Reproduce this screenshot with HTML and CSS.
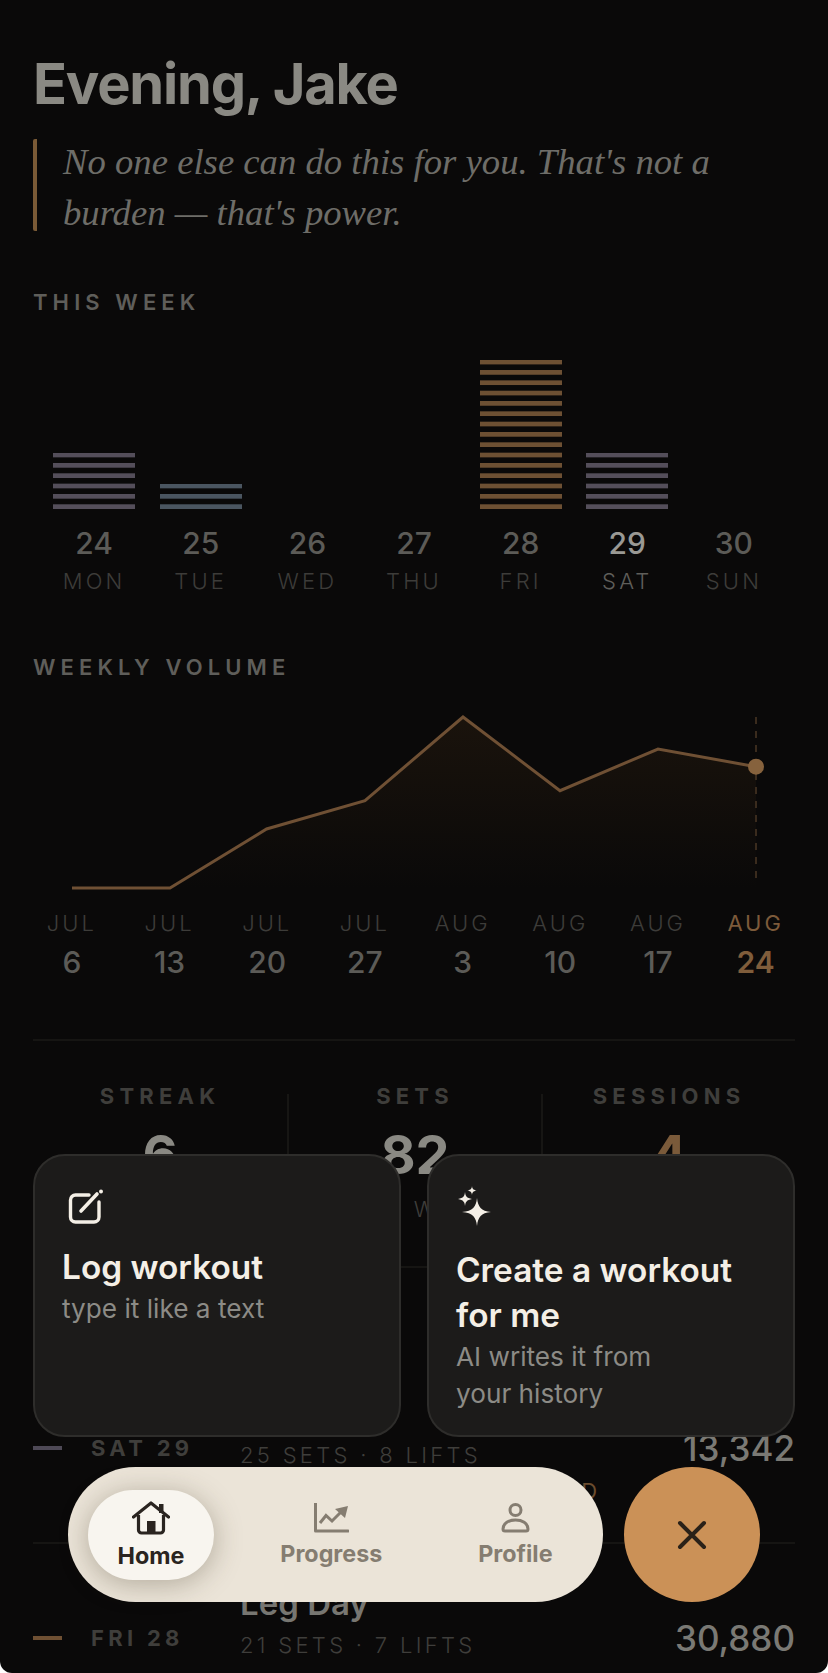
FILE: index.html
```html
<!DOCTYPE html>
<html lang="en">
<head>
<meta charset="utf-8">
<title>Home</title>
<link rel="stylesheet" href="styles.css">
</head>
<body>
<div class="screen">
  <main class="content">
    <h1 class="greeting">Evening, Jake</h1>
    <blockquote class="quote"><p class="quote-text">No one else can do this for you. That's not a burden — that's power.</p></blockquote>

    <h2 class="section-label week-label">THIS WEEK</h2>
    <div class="week-bars">
      <div class="bar bar-plum s6"></div>
      <div class="bar bar-slate s3"></div>
      <div class="bar"></div>
      <div class="bar"></div>
      <div class="bar bar-amber s15"></div>
      <div class="bar bar-plum s6"></div>
      <div class="bar"></div>
    </div>
    <div class="week-days">
      <div class="day"><b>24</b><span>MON</span></div>
      <div class="day"><b>25</b><span>TUE</span></div>
      <div class="day"><b>26</b><span>WED</span></div>
      <div class="day"><b>27</b><span>THU</span></div>
      <div class="day"><b>28</b><span>FRI</span></div>
      <div class="day today"><b>29</b><span>SAT</span></div>
      <div class="day"><b>30</b><span>SUN</span></div>
    </div>

    <h2 class="section-label volume-label">WEEKLY VOLUME</h2>
    <svg class="chart" viewBox="0 12 762 228" aria-hidden="true">
      <defs>
        <linearGradient id="area" x1="0" y1="0" x2="0" y2="1">
          <stop offset="0" stop-color="#1a130c"/>
          <stop offset="1" stop-color="#0a0909"/>
        </linearGradient>
      </defs>
      <path d="M39 219 L137 219 L233.600 160 L332 131.700 L430 48 L527 121.700 L625 80 L723 97.700 V219 Z" fill="url(#area)"/>
      <line x1="723" y1="48" x2="723" y2="216" stroke="#3a2b1d" stroke-width="2" stroke-dasharray="7 7"/>
      <path d="M39 219 L137 219 L233.600 160 L332 131.700 L430 48 L527 121.700 L625 80 L723 97.700" fill="none" stroke="#6f5034" stroke-width="3"/>
      <circle cx="723" cy="97.700" r="8" fill="#86623d"/>
    </svg>
    <div class="weeks">
      <div class="wk"><span>JUL</span><b>6</b></div>
      <div class="wk"><span>JUL</span><b>13</b></div>
      <div class="wk"><span>JUL</span><b>20</b></div>
      <div class="wk"><span>JUL</span><b>27</b></div>
      <div class="wk"><span>AUG</span><b>3</b></div>
      <div class="wk"><span>AUG</span><b>10</b></div>
      <div class="wk"><span>AUG</span><b>17</b></div>
      <div class="wk current"><span>AUG</span><b>24</b></div>
    </div>

    <section class="stats">
      <div class="stat"><h3>STREAK</h3><strong>6</strong><small>WEEKS</small></div>
      <div class="stat"><h3>SETS</h3><strong>82</strong><small>THIS WEEK</small></div>
      <div class="stat stat-accent"><h3>SESSIONS</h3><strong>4</strong><small>THIS WEEK</small></div>
    </section>

    <article class="row row-first">
      <div class="row-day"><i class="dash dash-plum"></i><span>SAT 29</span></div>
      <div class="row-main">
        <h4>Push Day</h4>
        <p class="row-meta">25 SETS · 8 LIFTS</p>
        <p class="row-note">BEST SET · 225 LB ADDED</p>
      </div>
      <div class="row-volume">13,342</div>
    </article>
    <article class="row">
      <div class="row-day"><i class="dash dash-amber"></i><span>FRI 28</span></div>
      <div class="row-main">
        <h4>Leg Day</h4>
        <p class="row-meta">21 SETS · 7 LIFTS</p>
        <p class="row-note">BEST SET · 315 LB ADDED</p>
      </div>
      <div class="row-volume">30,880</div>
    </article>
  </main>

  <div class="overlay">
    <div class="cards">
      <button class="card">
        <svg class="card-icon" width="36" height="36" viewBox="0 0 36 36" aria-hidden="true">
          <path d="M21 6 H7.500 A5 5 0 0 0 2.500 11 V28 A5 5 0 0 0 7.500 33 H26 A5 5 0 0 0 31 28 V13" fill="none" stroke="#f4efe6" stroke-width="3.400" stroke-linecap="round"/>
          <path d="M13 22 L29 5" fill="none" stroke="#f4efe6" stroke-width="3.600" stroke-linecap="round"/>
          <circle cx="33" cy="2.500" r="2" fill="#f4efe6"/>
        </svg>
        <span class="card-title">Log workout</span>
        <span class="card-sub">type it like a text</span>
      </button>
      <button class="card">
        <svg class="card-icon sparkle" width="36" height="40" viewBox="0 0 36 40" aria-hidden="true">
          <path d="M20 12 C21 21 24 25 34 26 C24 27 21 31 20 40 C19 31 16 27 5 26 C16 25 19 21 20 12 Z" fill="#f4efe6"/>
          <path d="M8 6 C8.500 10 9.500 12 15 13 C9.500 14 8.500 16 8 20 C7.500 16 6.500 14 1 13 C6.500 12 7.500 10 8 6 Z" fill="#f4efe6"/>
          <path d="M15 0 C15.300 2.500 16 3.700 19.500 4.500 C16 5.300 15.300 6.500 15 9 C14.700 6.500 14 5.300 10.500 4.500 C14 3.700 14.700 2.500 15 0 Z" fill="#f4efe6"/>
        </svg>
        <span class="card-title">Create a workout for me</span>
        <span class="card-sub">AI writes it from your history</span>
      </button>
    </div>

    <div class="dock">
      <nav class="tabs">
        <a class="tab active">
          <svg width="38" height="34" viewBox="0 0 38 34" aria-hidden="true">
            <path d="M1.500 16 L19 2 L36.500 16" fill="none" stroke="#2a2420" stroke-width="3.200" stroke-linecap="round" stroke-linejoin="round"/>
            <rect x="27" y="3" width="4.500" height="9" fill="#2a2420"/>
            <path d="M6.500 14 V29 A3 3 0 0 0 9.500 32 H28.500 A3 3 0 0 0 31.500 29 V14" fill="none" stroke="#2a2420" stroke-width="3.200"/>
            <rect x="15" y="20" width="8.500" height="12" fill="#2a2420"/>
          </svg>
          <span>Home</span>
        </a>
        <a class="tab">
          <svg width="35" height="30" viewBox="0 0 35 30" aria-hidden="true">
            <path d="M1.500 0 V28 H34" fill="none" stroke="#857d71" stroke-width="3" stroke-linecap="round" stroke-linejoin="round"/>
            <path d="M6 20 L12 12.500 L18 18 L27 9" fill="none" stroke="#857d71" stroke-width="3"/>
            <path d="M34 3 L21 6 L31 15 Z" fill="#857d71"/>
          </svg>
          <span>Progress</span>
        </a>
        <a class="tab">
          <svg width="29" height="30" viewBox="0 0 29 30" aria-hidden="true">
            <circle cx="14.500" cy="7" r="5.500" fill="none" stroke="#857d71" stroke-width="3"/>
            <path d="M2 26 C2 20 8 17 14.500 17 C21 17 27 20 27 26 C27 27.500 26 28 25 28 H4 C3 28 2 27.500 2 26 Z" fill="none" stroke="#857d71" stroke-width="3"/>
          </svg>
          <span>Profile</span>
        </a>
      </nav>
      <button class="fab" aria-label="Close">
        <svg width="30" height="30" viewBox="0 0 30 30" aria-hidden="true">
          <path d="M3 3 L27 27 M27 3 L3 27" fill="none" stroke="#2a2118" stroke-width="4" stroke-linecap="round"/>
        </svg>
      </button>
    </div>
  </div>
</div>
</body>
</html>
```

FILE: styles.css
```css
* { box-sizing: border-box; }
html, body { margin: 0; padding: 0; height: 100%; overflow: hidden; background: #fff; }
body { font-family: "Inter", "Liberation Sans", sans-serif; }

.screen {
  position: relative;
  width: 828px;
  height: 1673px;
  background: #0a0909;
  border-radius: 0 0 12px 12px;
  overflow: hidden;
}

.content { padding: 52px 33px 0; }

.greeting {
  margin: 0;
  font-size: 56px;
  line-height: 64px;
  font-weight: 700;
  letter-spacing: -1.200px;
  color: #8a8983;
}

.quote {
  display: flow-root;
  margin: 23px 0 0;
  padding: 0 30px 0 26px;
  border-left: 4px solid #7a5a36;
  border-radius: 2px;
  height: 92px;
  font-family: "Liberation Serif", serif;
  font-style: italic;
  font-size: 36.700px;
  line-height: 51px;
  color: #6e6d68;
}
.quote-text { margin: -3px 0 0; }

.section-label {
  margin: 0;
  font-size: 22px;
  line-height: 26px;
  font-weight: 600;
  letter-spacing: 5.100px;
  color: #5f5e5a;
}
.week-label { margin-top: 58px; }

.week-bars {
  display: flex;
  align-items: flex-end;
  gap: 24.500px;
  height: 151px;
  margin-top: 42.500px;
  padding: 0 20px;
}
.bar { flex: 1 1 0; background-size: 100% 10.330px; background-position: left bottom; }
.bar-plum { background-image: linear-gradient(to top, #544e5a 4.500px, transparent 4.500px); }
.bar-slate { background-image: linear-gradient(to top, #4a5560 4.500px, transparent 4.500px); }
.bar-amber { background-image: linear-gradient(to top, #6d5033 4.500px, transparent 4.500px); }
.s3 { height: 25px; }
.s6 { height: 56px; }
.s15 { height: 149px; }

.week-days {
  display: flex;
  gap: 24.500px;
  padding: 0 20px;
  margin-top: 16px;
}
.day { flex: 1 1 0; display: flex; flex-direction: column; align-items: center; }
.day b {
  font-size: 30px;
  line-height: 36px;
  font-weight: 500;
  color: #5c5b57;
}
.day span {
  margin-top: 7px;
  font-size: 22px;
  line-height: 26px;
  font-weight: 300;
  letter-spacing: 3.200px;
  color: #3d3c39;
}
.today b { color: #9a9994; font-weight: 500; }
.today span { color: #5f5e5a; font-weight: 300; }

.volume-label { margin-top: 60px; }

.chart { display: block; width: 762px; height: 228px; margin-top: 1px; }

.weeks {
  display: grid;
  grid-template-columns: repeat(8, 97.700px);
  margin-left: -10px;
  margin-top: 1px;
}
.wk { display: flex; flex-direction: column; align-items: center; }
.wk span {
  font-size: 22px;
  line-height: 26px;
  font-weight: 300;
  letter-spacing: 3px;
  color: #3d3c39;
}
.wk b {
  margin-top: 8px;
  font-size: 30px;
  line-height: 36px;
  font-weight: 500;
  color: #5c5b57;
}
.current span { color: #7c5a3a; font-weight: 400; }
.current b { color: #7f5d3b; font-weight: 600; }

.stats {
  display: grid;
  grid-template-columns: repeat(3, 1fr);
  margin-top: 59px;
  padding: 53.500px 0 0;
  height: 229px;
  border-top: 2px solid #161513;
  border-bottom: 2px solid #161513;
}
.stat {
  display: flex;
  flex-direction: column;
  align-items: center;
  height: 132px;
  border-left: 2px solid #171614;
  text-align: center;
}
.stat:first-child { border-left: 0; }
.stat h3 {
  margin: -11px 0 0;
  font-size: 22px;
  line-height: 26px;
  font-weight: 700;
  letter-spacing: 5.200px;
  color: #3f3e3b;
}
.stat strong {
  margin-top: 16px;
  font-size: 54px;
  line-height: 60px;
  font-weight: 700;
  color: #8a8983;
}
.stat small {
  margin-top: 11px;
  font-size: 22px;
  line-height: 26px;
  font-weight: 300;
  letter-spacing: 3px;
  color: #3f3e3b;
}
.stat-accent strong { color: #7a5a3a; }

.row {
  display: grid;
  grid-template-columns: 207px 1fr auto;
  height: 190px;
  border-bottom: 2px solid #161513;
  padding-top: 37px;
}
.row-first { margin-top: 86px; }
.row-day { display: flex; align-items: center; gap: 29px; height: 24px; margin-top: 45px; }
.dash { width: 29px; height: 4px; }
.dash-plum { background: #4e4956; }
.dash-amber { background: #6f5033; }
.row-day span {
  font-size: 22px;
  font-weight: 700;
  letter-spacing: 4.300px;
  color: #3f3e3b;
}
.row-main h4 {
  margin: 0;
  font-size: 33px;
  line-height: 44px;
  font-weight: 600;
  color: #777671;
}
.row-meta, .row-note {
  margin: 7.500px 0 0;
  font-size: 22px;
  line-height: 26px;
  font-weight: 300;
  letter-spacing: 3.300px;
  color: #3f3e3b;
}
.row-note { margin-top: 10px; color: #6b4c2e; font-weight: 400; letter-spacing: 3.600px; }
.row-volume {
  margin-top: 37px;
  font-size: 35px;
  line-height: 40px;
  font-weight: 500;
  color: #7a7974;
}

.overlay {
  position: absolute;
  top: 1154px;
  left: 33px;
  right: 33px;
  display: flex;
  flex-direction: column;
}
.cards { display: flex; gap: 26px; height: 283px; }
.card {
  flex: 1 1 0;
  display: flex;
  flex-direction: column;
  align-items: flex-start;
  padding: 34px 28px 0 27px;
  background: #1c1b1a;
  border: 2px solid #2e2d2b;
  border-radius: 32px;
  font-family: inherit;
  text-align: left;
}
.card-icon { display: block; margin: -1px 0 20px 6px; }
.sparkle { margin: -4px 0 22px 1px; }
.card-title {
  font-size: 33.400px;
  line-height: 45px;
  font-weight: 600;
  color: #f4efe6;
}
.card-sub {
  max-width: 250px;
  font-size: 26.200px;
  line-height: 37px;
  font-weight: 400;
  color: #8c8b86;
}

.dock { display: flex; gap: 21px; margin: 30px 35.500px 0 35px; }
.tabs {
  flex: 1 1 0;
  display: flex;
  align-items: center;
  gap: 37px;
  height: 135px;
  padding: 0 20px;
  background: #ebe4d8;
  border-radius: 68px;
}
.tab {
  display: flex;
  flex-direction: column;
  align-items: center;
  justify-content: center;
  gap: 8px;
  height: 90px;
  padding: 0 29.500px;
  border-radius: 45px;
  font-size: 23.300px;
  line-height: 26px;
  font-weight: 700;
  color: #857d71;
}
.tab svg { display: block; }
.active {
  background: #f8f5ef;
  color: #2a2420;
  box-shadow: 0 4px 28px rgba(70, 60, 40, .35);
}
.fab {
  flex: none;
  display: flex;
  align-items: center;
  justify-content: center;
  width: 136px;
  height: 135px;
  padding: 0;
  border: 0;
  border-radius: 50%;
  background: #cb9157;
}
```
